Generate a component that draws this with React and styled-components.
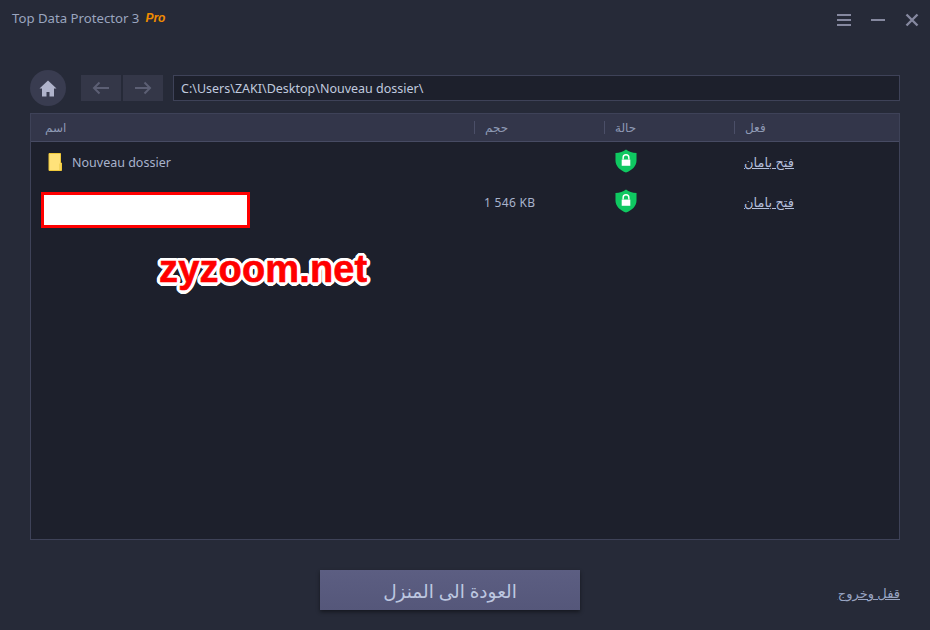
import React from 'react';
import styled, { createGlobalStyle } from 'styled-components';

const Global = createGlobalStyle`
  html, body { margin: 0; padding: 0; background: #262a38; }
  * { box-sizing: border-box; }
`;

const columns = '443px 130px 130px 1fr';

// round white outline for the watermark
const outline = Array.from({ length: 16 }, (_, i) => {
  const a = (i / 16) * Math.PI * 2;
  return `${(Math.cos(a) * 3.5).toFixed(2)}px ${(Math.sin(a) * 3.5).toFixed(2)}px 0 #fff`;
}).join(', ');

const Page = styled.div`
  width: 930px;
  height: 630px;
  position: relative;
  overflow: hidden;
  display: flex;
  flex-direction: column;
  background: #262a38;
  color: #a8b3cc;
  font-family: "Noto Sans", "DejaVu Sans", sans-serif;
  font-size: 12px;
`;

const TitleBar = styled.div`
  height: 70px;
  display: flex;
  justify-content: space-between;
  align-items: flex-start;
  padding: 9px 11px 0 12px;
`;

const Title = styled.div`
  display: flex;
  align-items: center;
  gap: 6px;
  height: 17px;
  font-size: 13.2px;
  color: #9aa5bf;
`;

const Pro = styled.span`
  font-family: "Liberation Sans", sans-serif;
  font-style: italic;
  font-weight: 700;
  font-size: 12px;
  color: #f08c00;
`;

const WindowButtons = styled.div`
  display: flex;
  align-items: center;
  gap: 12px;
  padding-top: 4px;
`;

const Toolbar = styled.div`
  display: flex;
  align-items: center;
  height: 36px;
  margin: 0 30px 7px;
`;

const HomeButton = styled.div`
  width: 36px;
  height: 36px;
  border-radius: 50%;
  background: #393c50;
  display: flex;
  align-items: center;
  justify-content: center;
  margin-right: 15px;
`;

const NavButton = styled.div`
  width: 40px;
  height: 26px;
  margin-right: 2px;
  background: #343748;
  display: flex;
  align-items: center;
  justify-content: center;
`;

const PathBox = styled.div`
  flex: 1;
  height: 26px;
  margin-left: 8px;
  padding: 0 7px;
  display: flex;
  align-items: center;
  background: #1d202c;
  border: 1px solid #3e4258;
  color: #c0cadf;
  font-size: 12.5px;
`;

const Table = styled.div`
  height: 427px;
  margin: 0 30px;
  background: #1d202c;
  border: 1px solid #3e4258;
  display: flex;
  flex-direction: column;
`;

const HeaderRow = styled.div`
  height: 28px;
  flex: none;
  display: grid;
  grid-template-columns: ${columns};
  align-items: center;
  background: #33364a;
  border-bottom: 1px solid #474b63;
`;

const HeaderCell = styled.div`
  height: 13px;
  display: flex;
  align-items: center;
  padding-left: ${p => p.$first ? '14px' : '10px'};
  border-left: ${p => p.$first ? 'none' : '1px solid #4b4f68'};
  color: #8f9ab5;
  font-size: 12px;
`;

const Row = styled.div`
  height: 40px;
  display: grid;
  grid-template-columns: ${columns};
  align-items: center;
`;

const NameCell = styled.div`
  display: flex;
  align-items: center;
  gap: 10px;
  padding-left: 17px;
  color: #a8b3cc;
  font-size: 12.5px;
`;

const SizeCell = styled.div`
  padding-left: 10px;
  font-size: 12px;
  letter-spacing: 0.3px;
  color: #a8b3cc;
`;

const StatusCell = styled.div`
  padding-left: 11px;
  display: flex;
  height: 26px;
`;

const ActionCell = styled.a`
  padding-left: 10px;
  font-size: 13px;
  color: #b4bfdb;
  text-decoration: underline;
`;

const RedactBox = styled.div`
  position: absolute;
  left: 41px;
  top: 192px;
  width: 209px;
  height: 36px;
  background: #fff;
  border: 3px solid #f00;
`;

const Watermark = styled.div`
  position: absolute;
  left: 159px;
  top: 246px;
  font-family: "Liberation Sans", sans-serif;
  font-weight: 700;
  font-size: 38px;
  letter-spacing: 0.15px;
  line-height: 46px;
  color: #f00;
  -webkit-text-stroke: 0.6px #f00;
  text-shadow: ${outline};
`;

const Footer = styled.div`
  position: relative;
  flex: 1;
  display: flex;
  justify-content: center;
  padding: 30px 30px 0 0;
`;

const BackButton = styled.div`
  width: 260px;
  height: 40px;
  display: flex;
  align-items: center;
  justify-content: center;
  background: linear-gradient(#5c5e82, #55577a);
  box-shadow: 0 2px 4px rgba(0, 0, 0, 0.45);
  color: #bdc7e0;
  font-size: 18.5px;
`;

const ExitLink = styled.a`
  position: absolute;
  right: 30px;
  top: 44px;
  font-size: 13px;
  color: #98a4c2;
  text-decoration: underline;
`;

const Menu = () => (
  <svg width="14" height="12" viewBox="0 0 14 12">
    <path d="M0 1h14M0 6h14M0 11h14" stroke="#85889f" strokeWidth="2" />
  </svg>
);

const Minimize = () => (
  <svg width="14" height="12" viewBox="0 0 14 12" style={{ marginLeft: 8 }}>
    <path d="M0 6h14" stroke="#85889f" strokeWidth="2" />
  </svg>
);

const Close = () => (
  <svg width="14" height="14" viewBox="0 0 14 14" style={{ marginLeft: 8 }}>
    <path d="M1.500 1.500l11 11M12.500 1.500l-11 11" stroke="#85889f" strokeWidth="2.4" />
  </svg>
);

const Home = () => (
  <svg width="18" height="17" viewBox="0 0 18 17">
    <path d="M9 0.500L0.500 8.500H3V16.500H7.500V12H10.500V16.500H15V8.500H17.500Z" fill="#b0b4cc" />
  </svg>
);

const Arrow = ({ flip }) => (
  <svg width="18" height="14" viewBox="0 0 18 14" style={flip ? { transform: 'scaleX(-1)' } : undefined}>
    <path d="M17 7H2M7.500 1.500L2 7l5.500 5.500" fill="none" stroke="#5c5f74" strokeWidth="2" />
  </svg>
);

const Folder = () => (
  <svg width="14" height="18" viewBox="0 0 14 18">
    <path d="M1 0.500H12.500V10H13.500V17.500H1Z" fill="#ffe27a" stroke="#f0c93a" />
    <path d="M11 10.500h2v6.500h-2z" fill="#f3d35c" />
  </svg>
);

const Shield = () => (
  <svg width="22" height="24" viewBox="0 0 23 25">
    <path d="M11.500 0.500C14.500 3 18 4 22.500 4.200V12C22.500 18 17.500 22.500 11.500 24.500C5.500 22.500 0.500 18 0.500 12V4.200C5 4 8.500 3 11.500 0.500Z" fill="#0fc861" />
    <path d="M8.500 11V9C8.500 7 9.800 6 11.500 6S14.500 7 14.500 9V11" fill="none" stroke="#fff" strokeWidth="1.500" />
    <rect x="7" y="11" width="9" height="6.500" fill="#fff" />
  </svg>
);

export default function App() {
  return (
    <Page>
      <Global />
      <TitleBar>
        <Title>
          Top Data Protector 3 <Pro>Pro</Pro>
        </Title>
        <WindowButtons>
          <Menu />
          <Minimize />
          <Close />
        </WindowButtons>
      </TitleBar>

      <Toolbar>
        <HomeButton><Home /></HomeButton>
        <NavButton><Arrow /></NavButton>
        <NavButton><Arrow flip /></NavButton>
        <PathBox>C:\Users\ZAKI\Desktop\Nouveau dossier\</PathBox>
      </Toolbar>

      <Table>
        <HeaderRow>
          <HeaderCell $first>اسم</HeaderCell>
          <HeaderCell>حجم</HeaderCell>
          <HeaderCell>حالة</HeaderCell>
          <HeaderCell>فعل</HeaderCell>
        </HeaderRow>
        <Row>
          <NameCell><Folder />Nouveau dossier</NameCell>
          <SizeCell />
          <StatusCell><Shield /></StatusCell>
          <ActionCell>فتح بامان</ActionCell>
        </Row>
        <Row>
          <NameCell />
          <SizeCell>1 546 KB</SizeCell>
          <StatusCell><Shield /></StatusCell>
          <ActionCell>فتح بامان</ActionCell>
        </Row>
      </Table>

      <Footer>
        <BackButton>العودة الى المنزل</BackButton>
        <ExitLink>قفل وخروج</ExitLink>
      </Footer>

      <RedactBox />
      <Watermark>zyzoom.net</Watermark>
    </Page>
  );
}
